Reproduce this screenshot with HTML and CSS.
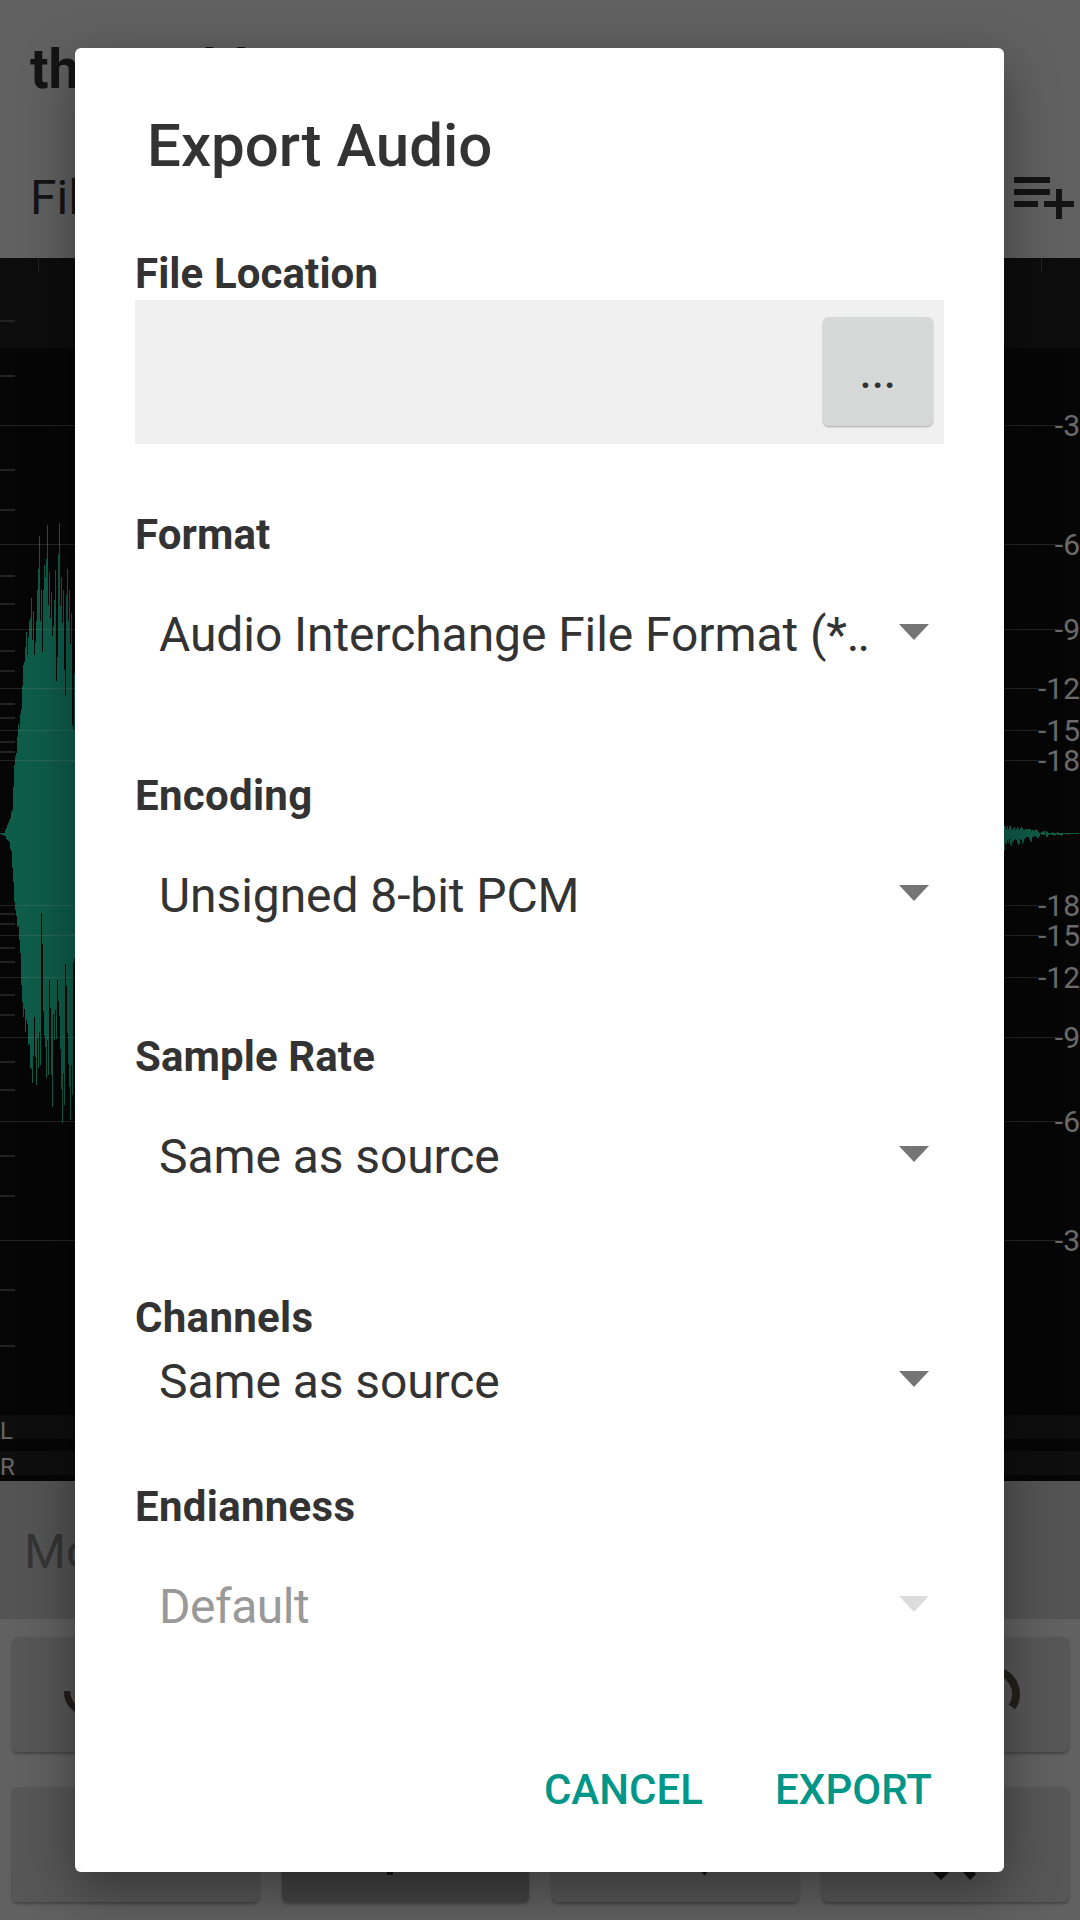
FILE: index.html
```html
<!DOCTYPE html>
<html lang="en">
  <head>
    <meta charset="UTF-8" />
    <meta name="viewport" content="width=device-width, initial-scale=1.0" />
    <title>Export Audio</title>
    <link rel="stylesheet" href="styles.css">
  </head>
  <body>
    <div class="editor">
      <header class="header">
        <div class="file-name">the world</div>
        <div class="menu">
          <span>File</span>
          <svg class="menu-icon" viewBox="0 0 24 24">
            <path d="M14 10H2v2h12v-2zm0-4H2v2h12V6zm4 8v-4h-2v4h-4v2h4v4h2v-4h4v-2h-4zM2 16h8v-2H2v2z" />
          </svg>
        </div>
      </header>

      <svg class="wave" viewBox="0 258 1080 1157">
        <rect class="ruler" x="0" y="258" width="1080" height="90" />
        <path class="wave-shape" id="wave" />
        <g id="grid"></g>
      </svg>

      <div class="meters">
        <div class="meter">L</div>
        <div class="meter">R</div>
      </div>

      <div class="mode">Mono</div>

      <div class="tools">
        <div class="tool-row two">
          <div class="tool">
            <svg class="tool-icon" viewBox="0 0 248 115">
              <path class="undo" d="M56 54a22.3 22.3 0 0 0 44.6 0" />
            </svg>
          </div>
          <div class="tool">
            <svg class="tool-icon right" viewBox="0 0 248 115">
              <path class="redo" d="M171.500 33.500a23.500 23.500 0 0 1 19.500 36.600" />
            </svg>
          </div>
        </div>
        <div class="tool-row">
          <div class="tool"></div>
          <div class="tool active">
            <svg class="tool-icon" viewBox="0 0 248 115"><path d="M106 50h6v38h-6z" /></svg>
          </div>
          <div class="tool">
            <svg class="tool-icon" viewBox="0 0 248 115"><path d="M138 70h31l-15.500 18.500z" /></svg>
          </div>
          <div class="tool">
            <svg class="tool-icon" viewBox="0 0 248 115">
              <path d="M105 78h30l-15 15zM136 78l6-6 13 15-6 6z" />
            </svg>
          </div>
        </div>
      </div>
    </div>

    <div class="dialog">
      <h1 class="title">Export Audio</h1>

      <div class="field">
        <div class="label">File Location</div>
        <div class="location"><button class="browse">...</button></div>
      </div>
      <div class="field">
        <div class="label">Format</div>
        <div class="spinner">
          <span>Audio Interchange File Format (*<b class="dots">..</b></span><i class="arrow"></i>
        </div>
      </div>
      <div class="field">
        <div class="label wide">Encoding</div>
        <div class="spinner"><span>Unsigned 8-bit PCM</span><i class="arrow"></i></div>
      </div>
      <div class="field">
        <div class="label">Sample Rate</div>
        <div class="spinner"><span>Same as source</span><i class="arrow"></i></div>
      </div>
      <div class="field">
        <div class="label wide">Channels</div>
        <div class="spinner short"><span>Same as source</span><i class="arrow"></i></div>
      </div>
      <div class="field">
        <div class="label wide">Endianness</div>
        <div class="spinner disabled"><span>Default</span><i class="arrow"></i></div>
      </div>

      <div class="actions">
        <button class="action">CANCEL</button>
        <button class="action">EXPORT</button>
      </div>
    </div>

    <script src="wave.js"></script>
  </body>
</html>
```

FILE: styles.css
```css
* {
  box-sizing: border-box;
}
body {
  margin: 0;
  width: 1080px;
  height: 1920px;
  position: relative;
  overflow: hidden;
  background: #616161;
  font-family: Roboto, sans-serif;
  color: #333;
}

/* editor behind the dialog */
.editor {
  display: flex;
  flex-direction: column;
  height: 1920px;
  color: #141414;
}
.header {
  height: 258px;
  padding: 37px 0 0 30px;
}
.file-name {
  font-size: 55px;
  line-height: 64px;
  font-weight: 700;
  word-spacing: -12px;
}
.menu {
  display: flex;
  justify-content: space-between;
  padding-top: 58px;
  font-size: 48px;
  line-height: 78px;
}
.menu-icon {
  width: 72px;
  height: 72px;
  fill: #141414;
}
.wave {
  display: block;
  flex: none;
  width: 1080px;
  height: 1157px;
  background: #060606;
}
.ruler {
  fill: #0d0d0d;
}
.wave-shape {
  fill: #0e5d49;
}
.grid-line {
  fill: #808080;
  fill-opacity: 0.25;
}
.tick {
  fill: #222;
}
.db {
  font-size: 30px;
  fill: #6a6a6a;
  text-anchor: end;
}
.meters {
  display: flex;
  flex-direction: column;
  gap: 12px;
  height: 66px;
  background: #060606;
}
.meter {
  height: 24px;
  background: #0e0e0e;
  color: #666;
  font-size: 24px;
  line-height: 33px;
}
.mode {
  height: 138px;
  padding-left: 24px;
  background: #545454;
  color: #353535;
  font-size: 48px;
  line-height: 141px;
}
.tools {
  display: flex;
  flex-direction: column;
  gap: 35px;
  padding: 18px 11px 0 12px;
}
.tool-row {
  display: grid;
  grid-template-columns: repeat(4, 1fr);
  gap: 23px;
}
.tool-row.two {
  grid-template-columns: repeat(2, 1fr);
}
.tool {
  display: flex;
  height: 115px;
  border-radius: 6px;
  background: #575757;
  box-shadow: 0 2px 3px rgba(0, 0, 0, 0.3);
}
.tool.active {
  background: #444;
}
.tool-icon {
  flex: none;
  width: 248px;
  height: 115px;
  margin-left: -1px;
  fill: #111;
}
.tool-icon.right {
  margin-left: auto;
}
.undo {
  fill: none;
  stroke: #251d1d;
  stroke-width: 6.5;
}
.redo {
  fill: none;
  stroke: #23211c;
  stroke-width: 8;
}

/* export dialog */
.dialog {
  position: absolute;
  left: 75px;
  top: 48px;
  width: 929px;
  height: 1824px;
  padding: 63px 60px 0;
  border-radius: 6px;
  background: #fff;
  box-shadow: 0 18px 54px rgba(0, 0, 0, 0.4);
}
.title {
  margin: 0 0 68px;
  padding-left: 12px;
  font-size: 60px;
  line-height: 70px;
  font-weight: 500;
}
.field {
  margin-bottom: 66px;
}
.label {
  height: 51px;
  font-size: 42px;
  line-height: 49px;
  font-weight: 700;
  letter-spacing: 0.1px;
}
.label.wide {
  letter-spacing: 0.3px;
}
.location {
  display: flex;
  justify-content: flex-end;
  align-items: center;
  height: 144px;
  padding-right: 11px;
  background: #f0f0f0;
}
.browse {
  width: 110px;
  height: 109px;
  margin-bottom: 1px;
  padding: 3px 0 0;
  border: 0;
  border-radius: 6px;
  background: #d6d8d7;
  box-shadow: 0 1px 2px rgba(0, 0, 0, 0.3);
  color: #333;
  font: 500 42px Roboto, sans-serif;
  letter-spacing: 0.5px;
}
.spinner {
  display: flex;
  justify-content: space-between;
  align-items: center;
  height: 144px;
  padding: 0 15px 0 24px;
  font-size: 48px;
  line-height: 56px;
  letter-spacing: -0.08px;
}
.spinner span {
  padding-top: 4px;
}
.spinner.short {
  height: 72px;
}
.spinner.disabled {
  color: #999;
  letter-spacing: -0.5px;
}
.dots {
  font-weight: 400;
  letter-spacing: -2px;
}
.arrow {
  width: 30px;
  height: 16px;
  margin-bottom: 2px;
  background: #757575;
  clip-path: polygon(0 0, 100% 0, 50% 100%);
}
.disabled .arrow {
  background: #dcdcdc;
}
.actions {
  display: flex;
  justify-content: flex-end;
  gap: 72px;
  padding: 22px 12px 0 0;
}
.action {
  padding: 0;
  border: 0;
  background: none;
  color: #009688;
  font: 500 42px/49px Roboto, sans-serif;
  letter-spacing: 0.05px;
}
```

FILE: wave.js
```js
const AXIS = 833;

// peak heights above / below the axis, one per pixel column
const attack = {
  x: 0,
  up: [0, 0, 0, 0, 0, 3, 5, 8, 10, 13, 15, 21, 23, 46, 68, 77, 80, 96, 109, 104, 119, 124, 147, 168, 171,
    186, 201, 178, 196, 212, 215, 235, 193, 222, 178, 191, 212, 243, 264, 297, 212, 243, 181, 243, 268,
    256, 274, 308, 228, 261, 215, 241, 197, 207, 233, 263, 152, 176, 279, 310, 227, 256, 210, 243, 163,
    137, 238, 264, 212, 243, 189, 220, 108, 103, 160],
  down: [1, 1, 2, 2, 3, 3, 6, 7, 8, 9, 16, 18, 35, 49, 69, 77, 83, 94, 93, 107, 120, 152, 169, 184, 176,
    199, 187, 191, 212, 211, 235, 236, 250, 223, 184, 224, 252, 205, 235, 199, 232, 80, 111, 178, 203,
    214, 245, 207, 242, 147, 175, 242, 274, 181, 207, 177, 206, 147, 168, 183, 216, 256, 290, 240, 272,
    131, 153, 200, 231, 254, 287, 232, 262, 130, 126],
};
const tail = {
  x: 1004,
  up: [7, 7, 4, 7, 4, 7, 7, 5, 3, 5, 6, 3, 4, 6, 5, 3, 5, 6, 5, 3, 3, 4, 4, 4, 4, 4, 4, 2, 3, 3, 2, 4, 3, 3,
    1, 0, 0, 1, 1, 2, 2, 0, 2, 1, 0, 0, 0, 0, 1, 0, 0, 0, 0, 1, 0, 0, 0, 0, 0, 0, 0, 0, 0, 0, 0, 0, 0, 0,
    0, 0, 0, 0, 0, 0, 0],
  down: [18, 10, 11, 7, 10, 6, 12, 13, 9, 8, 7, 6, 7, 10, 12, 11, 6, 7, 11, 9, 6, 5, 4, 4, 4, 6, 8, 9, 4, 4,
    3, 3, 4, 5, 5, 3, 1, 1, 2, 2, 2, 1, 4, 4, 2, 2, 1, 2, 2, 2, 3, 2, 1, 2, 2, 2, 2, 3, 2, 1, 1, 1, 1, 2,
    1, 1, 1, 1, 1, 1, 1, 1, 1, 1, 1],
};

const lines = [
  [425, 3], [544, 6], [629, 9], [688, 12], [730, 15], [760, 18],
  [905, 18], [935, 15], [977, 12], [1037, 9], [1121, 6], [1240, 3],
];
const ticks = [
  320, 375, 469, 509, 575, 603, 650, 670, 703, 717, 741, 751,
  913, 923, 947, 961, 994, 1014, 1061, 1089, 1155, 1195, 1289, 1345,
];

let d = "";
[attack, tail].forEach(({ x, up, down }) => {
  up.forEach((u, i) => {
    d += `M${x + i} ${AXIS - u}h1v${u + down[i]}h-1z`;
  });
});
document.querySelector("#wave").setAttribute("d", d);

let grid = "";
lines.forEach(([y, db]) => {
  grid += `<rect class="grid-line" x="0" y="${y}" width="${db > 9 ? 1039 : 1056}" height="1" />`;
  grid += `<text class="db" x="1080" y="${y + 11}">-${db}</text>`;
});
ticks.forEach((y) => {
  grid += `<rect class="tick" x="0" y="${y}" width="15" height="2" />`;
});
[38, 1041].forEach((x) => {
  grid += `<rect class="tick" x="${x}" y="258" width="1" height="15" />`;
});
document.querySelector("#grid").innerHTML = grid;
```
